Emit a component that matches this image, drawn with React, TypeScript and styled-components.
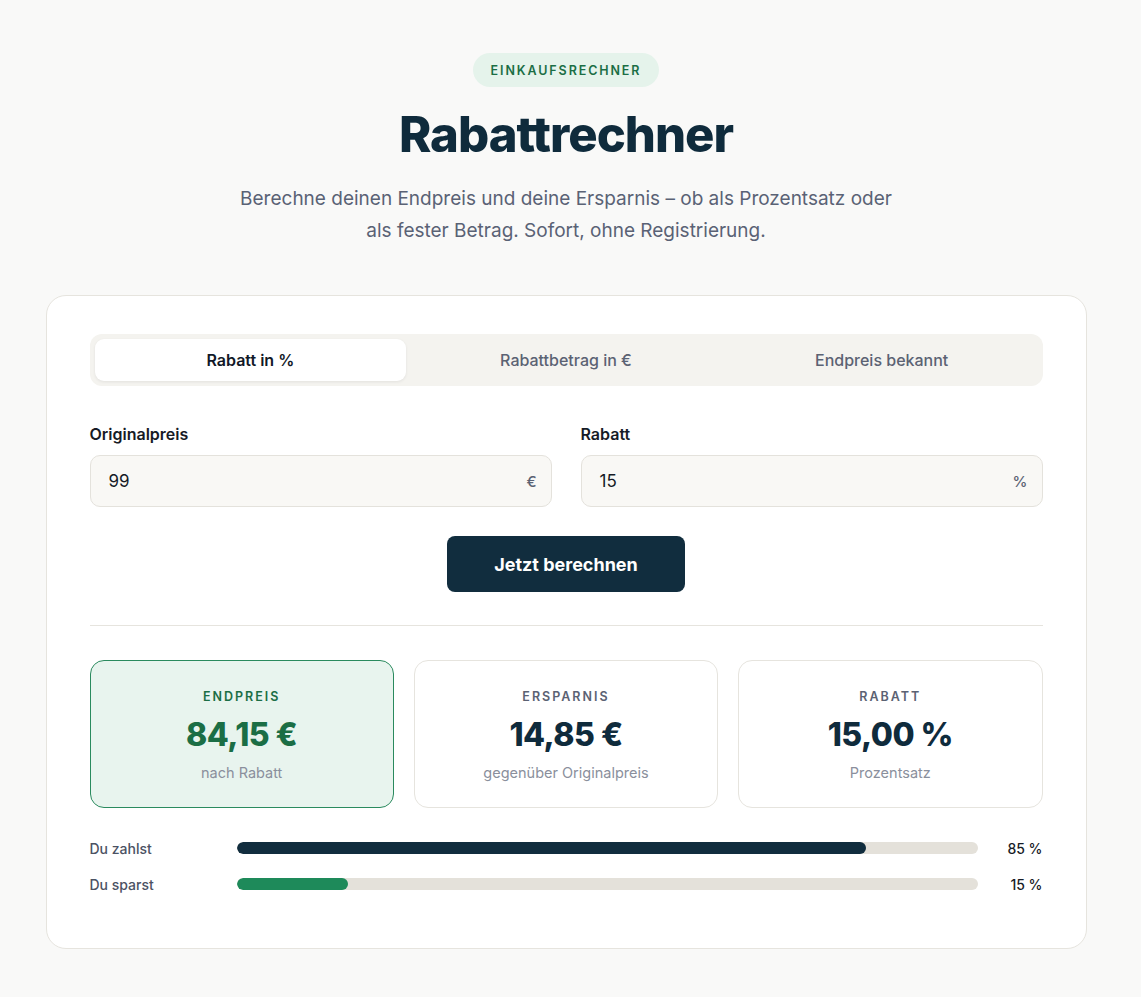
import React from "react";
import styled, { createGlobalStyle } from "styled-components";

const Global = createGlobalStyle`
  * { box-sizing: border-box; }
  body {
    margin: 0;
    background: #f9f9f8;
    font-family: "Inter", "Noto Sans", sans-serif;
    color: #0f2b3c;
  }
`;

const Page = styled.main`
  display: flex;
  flex-direction: column;
  align-items: center;
  padding: 53px 9px 49px 0;
`;

const Badge = styled.div`
  height: 34px;
  padding: 0 18px;
  border-radius: 17px;
  background: #e5f3eb;
  color: #1b6e45;
  font-size: 12.5px;
  font-weight: 600;
  letter-spacing: 1.9px;
  display: flex;
  align-items: center;
`;

const Title = styled.h1`
  margin: 20px 0 0;
  font-size: 49px;
  line-height: 56px;
  font-weight: 800;
  letter-spacing: -1px;
  color: #0f2b3c;
`;

const Lead = styled.p`
  margin: 20px 0 0;
  max-width: 670px;
  text-align: center;
  font-size: 19px;
  line-height: 32px;
  color: #5a6275;
  font-weight: 400;
`;

const Card = styled.section`
  margin-top: 48px;
  width: 1041px;
  background: #fff;
  border: 1px solid #e6e4de;
  border-radius: 20px;
  padding: 38px 43px 54px;
  display: flex;
  flex-direction: column;
`;

const Tabs = styled.div`
  display: grid;
  grid-template-columns: repeat(3, 1fr);
  gap: 4px;
  padding: 5px;
  background: #f4f3ef;
  border-radius: 12px;
`;

const Tab = styled.div<{ $active?: boolean }>`
  height: 42px;
  display: flex;
  align-items: center;
  justify-content: center;
  border-radius: 9px;
  font-size: 16px;
  font-weight: ${(p) => (p.$active ? 600 : 500)};
  color: ${(p) => (p.$active ? "#111827" : "#5b6273")};
  background: ${(p) => (p.$active ? "#fff" : "transparent")};
  box-shadow: ${(p) => (p.$active ? "0 1px 3px rgba(20,30,40,0.08)" : "none")};
`;

const Fields = styled.div`
  margin-top: 38px;
  display: grid;
  grid-template-columns: 1fr 1fr;
  gap: 29px;
`;

const Field = styled.div`
  display: flex;
  flex-direction: column;
`;

const Label = styled.label`
  font-size: 16px;
  font-weight: 600;
  color: #161b26;
  line-height: 20px;
  margin-bottom: 11px;
`;

const InputBox = styled.div`
  height: 52px;
  border: 1px solid #e4e2dc;
  background: #f9f8f5;
  border-radius: 10px;
  display: flex;
  align-items: center;
  justify-content: space-between;
  padding: 0 14px 0 18px;
  font-size: 17px;
  color: #161b26;
`;

const Unit = styled.span`
  font-size: 15px;
  font-weight: 500;
  color: #5b6273;
`;

const ButtonRow = styled.div`
  display: flex;
  justify-content: center;
  margin-top: 29px;
`;

const Button = styled.button`
  width: 238px;
  height: 56px;
  border: none;
  border-radius: 8px;
  background: #112d3e;
  color: #fff;
  font-family: inherit;
  font-size: 18px;
  font-weight: 700;
`;

const Divider = styled.hr`
  margin: 33px 0 0;
  border: none;
  border-top: 1px solid #e6e4de;
`;

const Results = styled.div`
  margin-top: 34px;
  display: grid;
  grid-template-columns: repeat(3, 1fr);
  gap: 20px;
`;

const Result = styled.div<{ $hl?: boolean }>`
  height: 148px;
  border-radius: 14px;
  border: 1px solid ${(p) => (p.$hl ? "#2a8a5e" : "#e6e4de")};
  background: ${(p) => (p.$hl ? "#e8f4ee" : "#fff")};
  display: flex;
  flex-direction: column;
  align-items: center;
  padding-top: 28px;
`;

const RLabel = styled.div<{ $hl?: boolean }>`
  font-size: 12.5px;
  font-weight: 600;
  letter-spacing: 2px;
  line-height: 16px;
  color: ${(p) => (p.$hl ? "#1b6e45" : "#5b6273")};
`;

const RValue = styled.div<{ $hl?: boolean }>`
  margin-top: 10px;
  font-size: 32px;
  line-height: 40px;
  font-weight: 800;
  letter-spacing: -0.5px;
  color: ${(p) => (p.$hl ? "#1b6e45" : "#0f2b3c")};
`;

const RSub = styled.div`
  margin-top: 9px;
  font-size: 14.5px;
  color: #8a8f9c;
`;

const Bars = styled.div`
  margin-top: 30px;
  display: flex;
  flex-direction: column;
  gap: 16px;
`;

const BarRow = styled.div`
  display: grid;
  grid-template-columns: 147px 1fr 65px;
  align-items: center;
  height: 20px;
`;

const BarLabel = styled.span`
  font-size: 14px;
  font-weight: 500;
  color: #4b5263;
`;

const Track = styled.div`
  height: 12px;
  border-radius: 6px;
  background: #e4e1da;
  overflow: hidden;
`;

const Fill = styled.div<{ $color: string }>`
  height: 100%;
  border-radius: 6px;
  background: ${(p) => p.$color};
`;

const Pct = styled.span`
  text-align: right;
  font-size: 14px;
  font-weight: 500;
  color: #161b26;
`;

export default function App() {
  const bars = [
    { label: "Du zahlst", pct: 85, color: "#112d3e" },
    { label: "Du sparst", pct: 15, color: "#1e8a5a" },
  ];
  return (
    <>
      <Global />
      <Page>
        <Badge>EINKAUFSRECHNER</Badge>
        <Title>Rabattrechner</Title>
        <Lead>
          Berechne deinen Endpreis und deine Ersparnis – ob als Prozentsatz oder
          als fester Betrag. Sofort, ohne Registrierung.
        </Lead>
        <Card>
          <Tabs>
            <Tab $active>Rabatt in %</Tab>
            <Tab>Rabattbetrag in €</Tab>
            <Tab>Endpreis bekannt</Tab>
          </Tabs>
          <Fields>
            <Field>
              <Label>Originalpreis</Label>
              <InputBox>
                <span>99</span>
                <Unit>€</Unit>
              </InputBox>
            </Field>
            <Field>
              <Label>Rabatt</Label>
              <InputBox>
                <span>15</span>
                <Unit>%</Unit>
              </InputBox>
            </Field>
          </Fields>
          <ButtonRow>
            <Button>Jetzt berechnen</Button>
          </ButtonRow>
          <Divider />
          <Results>
            <Result $hl>
              <RLabel $hl>ENDPREIS</RLabel>
              <RValue $hl>84,15 €</RValue>
              <RSub>nach Rabatt</RSub>
            </Result>
            <Result>
              <RLabel>ERSPARNIS</RLabel>
              <RValue>14,85 €</RValue>
              <RSub>gegenüber Originalpreis</RSub>
            </Result>
            <Result>
              <RLabel>RABATT</RLabel>
              <RValue>15,00 %</RValue>
              <RSub>Prozentsatz</RSub>
            </Result>
          </Results>
          <Bars>
            {bars.map((b) => (
              <BarRow key={b.label}>
                <BarLabel>{b.label}</BarLabel>
                <Track>
                  <Fill $color={b.color} style={{ width: `${b.pct}%` }} />
                </Track>
                <Pct>{b.pct} %</Pct>
              </BarRow>
            ))}
          </Bars>
        </Card>
      </Page>
    </>
  );
}
